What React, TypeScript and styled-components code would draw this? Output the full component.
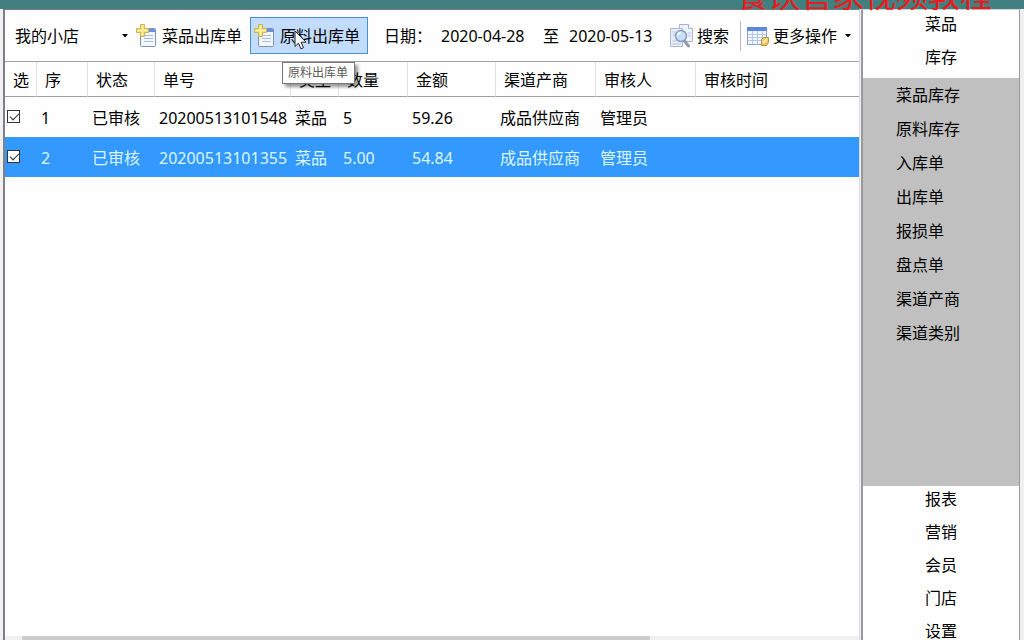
import React from 'react';
import styled, { createGlobalStyle } from 'styled-components';

const GlobalStyle = createGlobalStyle`
  * { box-sizing: border-box; }
  body {
    margin: 0;
    background: #f0f0f0;
    color: #000;
    font: 16px/24px "Noto Sans", "Noto Sans CJK SC", sans-serif;
  }
  button, input, select { font: inherit; color: inherit; }
`;

const Page = styled.div`
  display: flex;
  flex-direction: column;
  height: 100vh;
  overflow: hidden;
`;

const TitleStrip = styled.header`
  position: relative;
  flex: none;
  height: 9px;
  background: #408080;
`;

const Title = styled.h1`
  position: absolute;
  right: 32px;
  bottom: -2px;
  margin: 0;
  font-family: "Noto Sans CJK SC", sans-serif;
  font-size: 32px;
  line-height: 36px;
  font-weight: 400;
  white-space: nowrap;
  color: #f01818;
`;

const Body = styled.div`
  flex: 1;
  display: flex;
  gap: 1px;
  min-height: 0;
  padding: 0 4px 0 3px;
`;

const Main = styled.main`
  flex: 1;
  min-width: 0;
  display: flex;
  flex-direction: column;
  background: #fefefe;
  border-left: 2px groove #a0a0a0;
  border-left: 2px solid #808084;
  border-top: 1px solid #7a7a7a;
  border-right: 1px solid #dcdcdc;
`;

const Toolbar = styled.div`
  flex: none;
  display: flex;
  align-items: center;
  height: 52px;
  padding-left: 10px;
  border-bottom: 1px solid #a0a0a0;
  white-space: nowrap;
`;

const StorePicker = styled.label`
  display: flex;
  align-items: center;
  width: 121px;
`;

const StoreSelect = styled.select`
  flex: 1;
  height: 24px;
  padding: 0;
  border: 0;
  background: transparent;
  appearance: none;
  outline: none;
`;

const CaretSvg = styled.svg`
  flex: none;
  width: 6px;
  height: 4px;
  margin-left: 4px;
`;

const StoreCaret = styled(CaretSvg)`
  margin-right: 4px;
  pointer-events: none;
`;

const ToolButton = styled.button<{ $active?: boolean; $gap?: number }>`
  position: relative;
  display: flex;
  align-items: center;
  gap: ${(p) => p.$gap ?? 6}px;
  height: 37px;
  padding: 0 7px 0 3px;
  border: 1px solid ${(p) => (p.$active ? '#4a90d0' : 'transparent')};
  background: ${(p) => (p.$active ? '#c2dcfd' : 'transparent')};
`;

const DateRange = styled.div`
  display: flex;
  align-items: center;
  margin: 0 9px 0 16px;
`;

const DateLabel = styled.label`
  width: 57px;
`;

const DateInput = styled.input`
  width: 88px;
  height: 24px;
  padding: 0;
  border: 0;
  background: transparent;
  outline: none;
`;

const RangeWord = styled.span`
  margin: 0 10px 0 14px;
`;

const Divider = styled.span`
  width: 1px;
  height: 30px;
  margin: 0 2px 0 3px;
  background: #b8bcc0;
`;

const Tooltip = styled.span`
  position: absolute;
  z-index: 2;
  left: 31px;
  top: 44px;
  padding: 0 6px 0 5px;
  border: 1px solid #767676;
  background: #fff;
  box-shadow: 3px 3px 3px rgba(0, 0, 0, 0.4);
  font-size: 12px;
  line-height: 20px;
  color: #5a5a5a;
`;

const Pointer = styled.svg`
  position: absolute;
  z-index: 3;
  left: 43px;
  top: 12px;
  width: 13px;
  height: 20px;
`;

const Grid = styled.table`
  width: 100%;
  table-layout: fixed;
  border-collapse: separate;
  border-spacing: 0;
  white-space: nowrap;
`;

const HeadCell = styled.th`
  height: 35px;
  padding: 2px 0 0 8px;
  border-bottom: 1px solid #a0a0a0;
  border-right: 1px solid #e0e2e6;
  font-weight: 400;
  text-align: left;

  &:last-child { border-right: 0; }
`;

const Row = styled.tr<{ $selected: boolean }>`
  background: ${(p) => (p.$selected ? '#3399ff' : 'transparent')};
  color: ${(p) => (p.$selected ? '#dcf6ff' : '#000')};
`;

const Cell = styled.td`
  height: 40px;
  padding: 2px 0 0 4px;
`;

const CheckCell = styled.td`
  padding: 0 0 2px 2px;
`;

const Check = styled.input`
  display: block;
  position: relative;
  width: 13px;
  height: 13px;
  margin: 0;
  appearance: none;
  border: 1px solid #333;
  background: #fff;

  &:checked::after {
    content: '';
    position: absolute;
    left: 2px;
    top: 2px;
    width: 8px;
    height: 4px;
    border-left: 1px solid #222;
    border-bottom: 1px solid #222;
    transform: rotate(-45deg);
  }
`;

const ScrollTrack = styled.div`
  flex: none;
  height: 4px;
  margin-top: auto;
  padding-left: 17px;
  background: #f0f0f0;
`;

const ScrollThumb = styled.div`
  width: 75%;
  height: 4px;
  background: #cdcdcd;
`;

const Sidebar = styled.nav`
  flex: none;
  width: 159px;
  background: #fefefe;
  border: solid #9a9a9e;
  border-width: 1px 1px 0 2px;
  border-top-color: #d0d4d4;
`;

const Group = styled.div<{ $top: number; $bottom: number }>`
  display: flex;
  flex-direction: column;
  align-items: center;
  gap: 9px;
  padding: ${(p) => p.$top}px 0 ${(p) => p.$bottom}px;
`;

const SubGroup = styled.div`
  display: flex;
  flex-direction: column;
  gap: 10px;
  min-height: 408px;
  padding: 5px 0 0 33px;
  background: #c0c0c0;
`;

const NavLink = styled.a`
  color: inherit;
  text-decoration: none;
`;

const caretPath = <path d="M0 0h6L3 3.5z" fill="#000" />;

function NewSheetIcon() {
  return (
    <svg width="20" height="24" viewBox="0 0 20 24" aria-hidden="true">
      <rect x="4.5" y="4.5" width="15" height="18" rx="1" fill="#f2f6fd" stroke="#8290b4" />
      <rect x="5" y="5" width="14" height="3" fill="#6b8fe0" />
      <path d="M8 11.5h9M8 14.5h9M8 17.5h9" stroke="#a9bbdf" />
      <path d="M4.500 .5h4v4h4v4h-4v4h-4v-4h-4v-4h4z" fill="#f6e27a" stroke="#cdb35c" />
      <path d="M6.500 2v9M2 6.500h9" stroke="#fff3a8" />
    </svg>
  );
}

function SearchIcon() {
  return (
    <svg width="24" height="24" viewBox="0 0 24 24" aria-hidden="true">
      <path d="M9.5 .5h9l4 4v13h-13z" fill="#eef2fa" stroke="#a8b2c8" />
      <path d="M18.5 .5v4h4" fill="#fff" stroke="#a8b2c8" />
      <path d="M.5 4.5h12v18H.5z" fill="#e6ecf8" stroke="#b0b9ce" />
      <path d="M2.5 8h3M2.5 11h2M2.5 17h4M2.5 20h8M18 9h3M18 12h3" stroke="#b6c3de" />
      <path d="M14.5 17l4 5" stroke="#9299ad" strokeWidth="3" strokeLinecap="round" />
      <circle cx="11" cy="12" r="5.5" fill="#c2e0fa" stroke="#8c9cba" strokeWidth="1.5" />
      <path d="M7.5 11.5c.4-2 1.500-3 3.500-3" fill="none" stroke="#fff" strokeWidth="1.500" />
    </svg>
  );
}

function MoreIcon() {
  return (
    <svg width="22" height="20" viewBox="0 0 22 20" aria-hidden="true">
      <rect x=".5" y="1.5" width="19" height="17" fill="#f3f7ff" stroke="#8ca2d0" />
      <rect x="0" y="1" width="20" height="4" fill="#5b88dc" />
      <path d="M1 8.5h18M1 11.5h18M1 14.5h18M5.5 5v13M10.5 5v13M15.5 5v13" stroke="#b3c6ea" />
      <path d="M14.5 13.5l2-2h5v5l-2 3h-5z" fill="#eec65e" stroke="#b8923c" />
      <path d="M16 17l4-4" stroke="#fff2b8" strokeWidth="2" />
    </svg>
  );
}

const columns = [
  { label: '选', width: 32 },
  { label: '序', width: 51 },
  { label: '状态', width: 67 },
  { label: '单号', width: 136 },
  { label: '类型', width: 48 },
  { label: '数量', width: 69 },
  { label: '金额', width: 88 },
  { label: '渠道产商', width: 100 },
  { label: '审核人', width: 100 },
  { label: '审核时间' },
];

const rows = [
  ['1', '已审核', '20200513101548', '菜品', '5', '59.26', '成品供应商', '管理员', ''],
  ['2', '已审核', '20200513101355', '菜品', '5.00', '54.84', '成品供应商', '管理员', ''],
];

const stockLinks = ['菜品库存', '原料库存', '入库单', '出库单', '报损单', '盘点单', '渠道产商', '渠道类别'];

export default function App() {
  return (
    <Page>
      <GlobalStyle />
      <TitleStrip>
        <Title>餐饮管家视频教程</Title>
      </TitleStrip>
      <Body>
        <Main>
          <Toolbar>
            <StorePicker>
              <StoreSelect aria-label="门店">
                <option>我的小店</option>
              </StoreSelect>
              <StoreCaret viewBox="0 0 6 4">{caretPath}</StoreCaret>
            </StorePicker>
            <ToolButton type="button">
              <NewSheetIcon />
              菜品出库单
            </ToolButton>
            <ToolButton type="button" $active>
              <NewSheetIcon />
              原料出库单
              <Tooltip role="tooltip">原料出库单</Tooltip>
              <Pointer viewBox="0 0 13 20">
                <path
                  d="M1 1v15.5l3.500-3.300 2.400 5.600 2.600-1.100-2.400-5.500H12z"
                  fill="#fff"
                  stroke="#222"
                />
              </Pointer>
            </ToolButton>
            <DateRange>
              <DateLabel htmlFor="from">日期：</DateLabel>
              <DateInput id="from" type="text" defaultValue="2020-04-28" />
              <RangeWord>至</RangeWord>
              <DateInput type="text" aria-label="至" defaultValue="2020-05-13" />
            </DateRange>
            <ToolButton type="button" $gap={3}>
              <SearchIcon />
              搜索
            </ToolButton>
            <Divider />
            <ToolButton type="button" $gap={4}>
              <MoreIcon />
              更多操作
              <CaretSvg viewBox="0 0 6 4">{caretPath}</CaretSvg>
            </ToolButton>
          </Toolbar>
          <Grid>
            <colgroup>
              {columns.map((c) => (
                <col key={c.label} width={c.width} />
              ))}
            </colgroup>
            <thead>
              <tr>
                {columns.map((c) => (
                  <HeadCell key={c.label} scope="col">{c.label}</HeadCell>
                ))}
              </tr>
            </thead>
            <tbody>
              {rows.map((row, i) => (
                <Row key={row[0]} $selected={i === 1}>
                  <CheckCell>
                    <Check type="checkbox" defaultChecked aria-label={`选 ${row[0]}`} />
                  </CheckCell>
                  {row.map((value, j) => (
                    <Cell key={j}>{value}</Cell>
                  ))}
                </Row>
              ))}
            </tbody>
          </Grid>
          <ScrollTrack>
            <ScrollThumb />
          </ScrollTrack>
        </Main>
        <Sidebar>
          <Group $top={2} $bottom={9}>
            <NavLink href="#dishes">菜品</NavLink>
            <NavLink href="#stock">库存</NavLink>
          </Group>
          <SubGroup>
            {stockLinks.map((label) => (
              <NavLink key={label} href="#stock">{label}</NavLink>
            ))}
          </SubGroup>
          <Group $top={1} $bottom={8}>
            {['报表', '营销', '会员', '门店', '设置'].map((label) => (
              <NavLink key={label} href="#section">{label}</NavLink>
            ))}
          </Group>
        </Sidebar>
      </Body>
    </Page>
  );
}
